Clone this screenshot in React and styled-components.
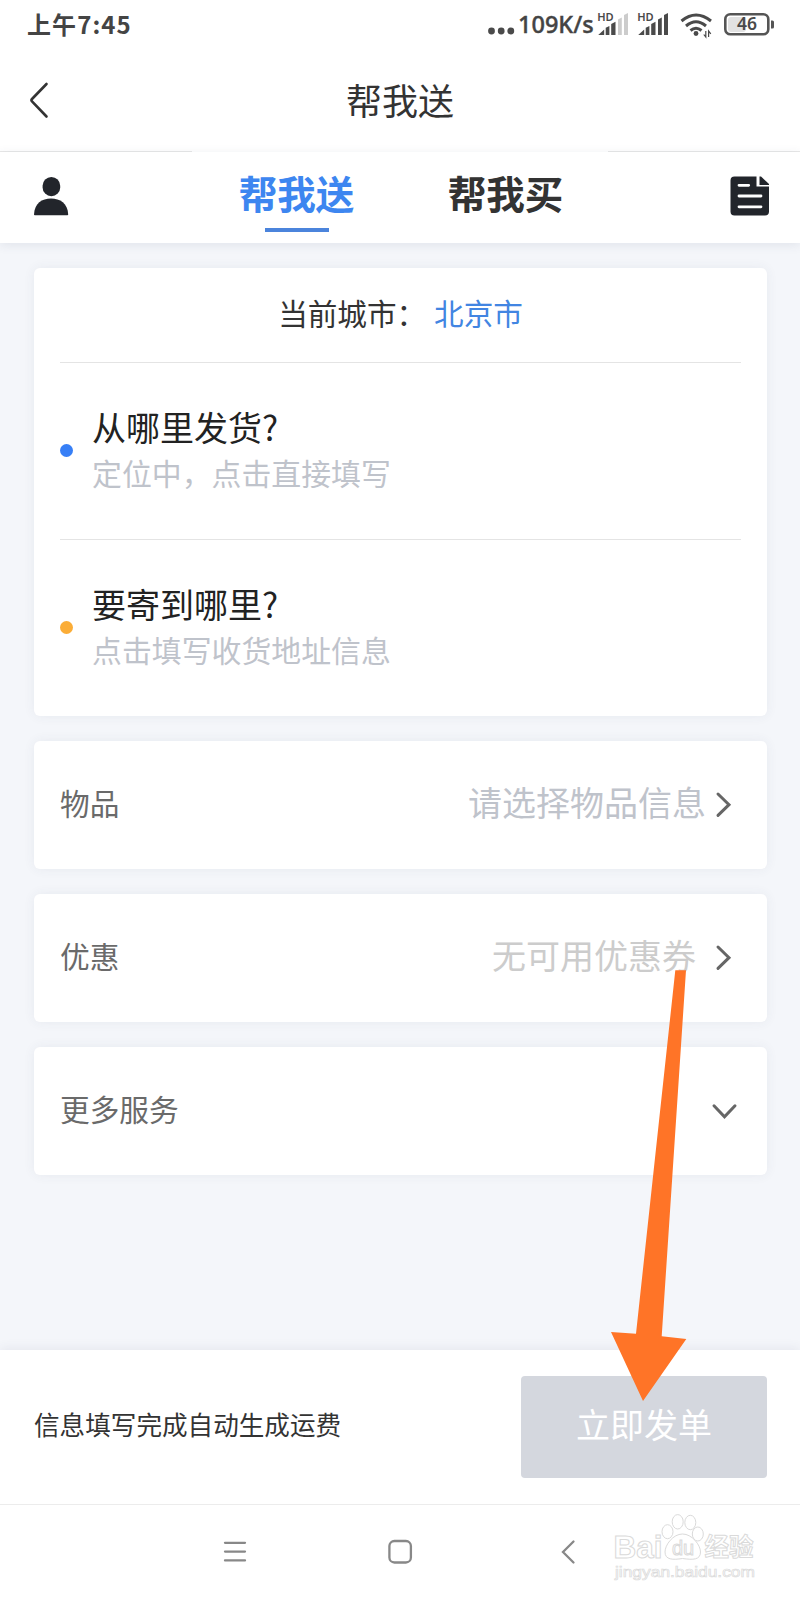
import React from 'react';
import styled, { createGlobalStyle } from 'styled-components';

const Global = createGlobalStyle`
  * { box-sizing: border-box; }
  body { margin: 0; background: #fff; }
`;

const Screen = styled.div`
  position: relative;
  width: 800px;
  height: 1600px;
  display: flex;
  flex-direction: column;
  background: #f4f6fa;
  overflow: hidden;
  font-family: 'Noto Sans CJK SC', sans-serif;
  color: #333;
  white-space: nowrap;
`;

const StatusBar = styled.div`
  height: 50px;
  flex: none;
  padding: 0 25px 0 27px;
  display: flex;
  justify-content: space-between;
  align-items: flex-start;
  background: #fff;
`;

const Clock = styled.span`
  font-size: 24px;
  line-height: 48px;
  font-weight: 700;
  color: #444;
  letter-spacing: 1.1px;
`;

const StatusRight = styled.div`
  display: flex;
  align-items: center;
  height: 50px;
`;

const Speed = styled.span`
  font-family: 'Noto Sans', sans-serif;
  font-size: 23.5px;
  font-weight: 500;
  line-height: 49px;
  height: 50px;
  width: 79px;
  margin-left: 3px;
  color: #444;
  -webkit-text-stroke: 0.4px #444;
`;

const Header = styled.header`
  height: 102px;
  flex: none;
  display: grid;
  grid-template-columns: 192px 1fr 192px;
  background: #fff;
`;

const HeaderSide = styled.div`
  border-bottom: 1px solid #e8e8e8;
  padding: 32px 0 0 28px;
`;

const Title = styled.h1`
  margin: 0;
  font-size: 36px;
  font-weight: 400;
  line-height: 98px;
  text-align: center;
`;

const TabBar = styled.nav`
  height: 91px;
  flex: none;
  padding: 0 30px 0 33px;
  display: flex;
  justify-content: space-between;
  align-items: flex-start;
  background: #fff;
  box-shadow: 0 2px 10px rgba(60, 70, 100, 0.1);
  z-index: 1;
`;

const Tabs = styled.div`
  display: flex;
  gap: 93px;
  padding-left: 3px;
`;

const Tab = styled.div`
  width: 116px;
  height: 80px;
  display: flex;
  flex-direction: column;
  align-items: center;
  justify-content: space-between;
  font-size: 38.5px;
  font-weight: 700;
  line-height: 81px;
  color: ${(p) => (p.$active ? '#3d86f0' : '#333')};
  &::after {
    content: '';
    flex: none;
    width: 64px;
    height: 4px;
    margin-top: -5px;
    background: ${(p) => (p.$active ? '#4b84dc' : 'transparent')};
  }
`;

const TabIcon = styled.div`
  padding-top: 24px;
  height: 80px;
`;

const Content = styled.main`
  flex: 1;
  padding: 25px 33px 0 34px;
  display: flex;
  flex-direction: column;
  gap: 25px;
`;

const Card = styled.section`
  background: #fff;
  border-radius: 6px;
  padding: 0 26px;
  box-shadow: 0 0 12px rgba(60, 70, 100, 0.07);
`;

const AddressCard = styled(Card)`
  height: 448px;
`;

const City = styled.div`
  height: 95px;
  border-bottom: 1px solid #e4e4e4;
  display: flex;
  justify-content: center;
  font-size: 29.6px;
  line-height: 90px;
`;

const CityName = styled.span`
  margin-left: 8px;
  color: #4285e2;
`;

const Address = styled.div`
  height: 177px;
  display: flex;
  align-items: center;
  gap: 19px;
  padding-bottom: ${(p) => (p.$last ? '2px' : '1px')};
  border-bottom: ${(p) => (p.$last ? '0' : '1px solid #e4e4e4')};
`;

const AddressText = styled.div`
  padding-bottom: 4px;
`;

const Dot = styled.i`
  width: 13px;
  height: 13px;
  border-radius: 50%;
  background: ${(p) => p.$color};
`;

const Question = styled.div`
  font-size: 34px;
  line-height: 47px;
  color: #222;
`;

const Hint = styled.div`
  font-size: 29.9px;
  line-height: 45px;
  color: #bfc3cb;
`;

const OptionCard = styled(Card)`
  height: 128px;
  padding-right: 28px;
  display: flex;
  align-items: center;
  font-size: 29.7px;
  line-height: 40px;
  color: #6a6a6a;
`;

const OptionLabel = styled.span`
  padding-bottom: 4px;
`;

const OptionValue = styled.span`
  margin-left: auto;
  margin-right: ${(p) => p.$gap}px;
  padding-bottom: 6px;
  font-size: 34px;
  color: ${(p) => p.$color};
`;

const Chevron = styled.svg`
  flex: none;
  width: 30px;
  height: 30px;
  margin-left: ${(p) => (p.$push ? 'auto' : '0')};
  fill: none;
  stroke: #666;
  stroke-width: 3;
  stroke-linecap: round;
`;

const SubmitBar = styled.footer`
  height: 154px;
  flex: none;
  padding: 0 33px 0 34px;
  display: flex;
  align-items: center;
  justify-content: space-between;
  background: #fff;
  box-shadow: 0 -2px 10px rgba(60, 70, 100, 0.08);
`;

const FeeNote = styled.span`
  padding-bottom: 8px;
  font-size: 25.6px;
`;

const Submit = styled.button`
  width: 246px;
  height: 102px;
  padding: 0 0 6px;
  border: 0;
  border-radius: 4px;
  background: #d4d7de;
  color: #fff;
  font: 400 34px/96px 'Noto Sans CJK SC', sans-serif;
`;

const NavBar = styled.div`
  height: 96px;
  flex: none;
  border-top: 1px solid #ececec;
  background: #fff;
  padding: 0 219px 0 220px;
  display: flex;
  justify-content: space-between;
  align-items: center;
`;

const NavIcon = styled.svg`
  width: 30px;
  height: 30px;
  fill: none;
  stroke: #888;
  stroke-width: 2.3;
  stroke-linecap: round;
`;

const Watermark = styled.div`
  position: absolute;
  left: 613px;
  top: 1512px;
  width: 148px;
  height: 76px;
`;

const Arrow = styled.svg`
  position: absolute;
  left: 600px;
  top: 960px;
  z-index: 3;
`;

function Signal({ weak }) {
  const faint = weak ? '#ccc' : '#4a4a4a';
  return (
    <svg width="40" height="30" viewBox="0 0 40 30" fill="#4a4a4a">
      <text x="0.2" y="11" fontSize="11.5" fontWeight="600" textLength="16.5" lengthAdjust="spacingAndGlyphs" fontFamily="Noto Sans">HD</text>
      <path d="M1.2 25 L7.2 19.5 V25Z M8.7 17.7 L12.4 16 V25 H8.7Z M14.2 14 L18.5 11.8 V25 H14.2Z" />
      <path fill={faint} d="M21 9.5 L24.8 7.5 V25 H21Z M27 5 L31 3 V25 H27Z" />
    </svg>
  );
}

export default function App() {
  return (
    <Screen>
      <Global />
      <StatusBar>
        <Clock>上午7:45</Clock>
        <StatusRight>
          <svg width="28" height="30" viewBox="0 0 28 30" fill="#4a4a4a">
            <circle cx="4.5" cy="21" r="3.4" /><circle cx="14.2" cy="21" r="3.4" /><circle cx="23.8" cy="21" r="3.4" />
          </svg>
          <Speed>109K/s</Speed>
          <Signal weak />
          <Signal />
          <svg width="46" height="30" viewBox="0 0 46 30" fill="none" stroke="#4a4a4a" strokeWidth="3">
            <path d="M4.5 11 Q19 -1 34 11" />
            <path d="M9 16 Q19 7.5 29 16" />
            <path d="M13.5 20.5 Q19 16 24.5 20.5" />
            <circle cx="19" cy="23.5" r="2.4" fill="#4a4a4a" stroke="none" />
            <path strokeWidth="1.2" d="M28.8 21 V27 L26.8 24.5 M31.6 27 V21 L33.8 23.8" />
          </svg>
          <svg width="52" height="30" viewBox="0 0 52 30">
            <rect x="2.3" y="4.3" width="43" height="20" rx="5" fill="none" stroke="#555" strokeWidth="2.6" />
            <rect x="5" y="7" width="18" height="15" rx="3" fill="#e2e2e2" />
            <path d="M48 10.5 h1.5 q1.5 0 1.5 1.5 v5 q0 1.5 -1.5 1.5 h-1.5z" fill="#555" />
            <text x="24" y="20.3" textAnchor="middle" fontSize="17" fontWeight="600" fill="#4a4a4a" fontFamily="Noto Sans" textLength="20" lengthAdjust="spacingAndGlyphs">46</text>
          </svg>
        </StatusRight>
      </StatusBar>

      <Header>
        <HeaderSide>
          <svg width="22" height="38" viewBox="0 0 22 38" fill="none" stroke="#333" strokeWidth="2.6" strokeLinecap="round">
            <path d="M18.5 2 L4 17 Q2.8 18.2 4 19.4 L18.5 34.5" />
          </svg>
        </HeaderSide>
        <Title>帮我送</Title>
        <HeaderSide />
      </Header>

      <TabBar>
        <TabIcon>
          <svg width="36" height="40" viewBox="0 0 36 40" fill="#22252b">
            <rect x="9.6" y="1" width="17.6" height="19.2" rx="8.8" />
            <path d="M1 38.5 C1.5 27 9 22.5 18 22.5 S34.7 27 35.2 38.5 Q35.2 39.2 34.4 39.2 H1.8 Q1 39.2 1 38.5Z" />
          </svg>
        </TabIcon>
        <Tabs>
          <Tab $active>帮我送</Tab>
          <Tab>帮我买</Tab>
        </Tabs>
        <TabIcon>
          <svg width="40" height="40" viewBox="0 0 40 40" fill="#22252b">
            <path d="M4.5 0.5 H26.5 V10.5 H39 V35.5 Q39 39.5 35 39.5 H4.5 Q0.5 39.5 0.5 35.5 V4.5 Q0.5 0.5 4.5 0.5Z" />
            <path d="M29.5 0.5 H31 L39 8 V9 H29.5Z" />
            <path d="M9 9.3 H18.7 M9 20 H31 M9 30.8 H31" stroke="#fff" strokeWidth="2.8" strokeLinecap="round" />
          </svg>
        </TabIcon>
      </TabBar>

      <Content>
        <AddressCard>
          <City>当前城市：<CityName>北京市</CityName></City>
          <Address>
            <Dot $color="#377ff6" />
            <AddressText>
              <Question>从哪里发货?</Question>
              <Hint>定位中，点击直接填写</Hint>
            </AddressText>
          </Address>
          <Address $last>
            <Dot $color="#fbad37" />
            <AddressText>
              <Question>要寄到哪里?</Question>
              <Hint>点击填写收货地址信息</Hint>
            </AddressText>
          </Address>
        </AddressCard>
        <OptionCard>
          <OptionLabel>物品</OptionLabel>
          <OptionValue $color="#bfc3cb" $gap={3}>请选择物品信息</OptionValue>
          <Chevron viewBox="0 0 30 30"><path d="M9 4 L20 14.7 L9 25.4" /></Chevron>
        </OptionCard>
        <OptionCard>
          <OptionLabel>优惠</OptionLabel>
          <OptionValue $color="#ccc" $gap={13}>无可用优惠券</OptionValue>
          <Chevron viewBox="0 0 30 30"><path d="M9 4 L20 14.7 L9 25.4" /></Chevron>
        </OptionCard>
        <OptionCard>
          <OptionLabel>更多服务</OptionLabel>
          <Chevron $push viewBox="0 0 30 30"><path d="M5 9.8 L15.5 20.8 L26 9.8" /></Chevron>
        </OptionCard>
      </Content>

      <SubmitBar>
        <FeeNote>信息填写完成自动生成运费</FeeNote>
        <Submit>立即发单</Submit>
      </SubmitBar>

      <NavBar>
        <NavIcon viewBox="0 0 30 30"><path d="M5 4.8 H25 M5 13.6 H25 M5 22.4 H25" /></NavIcon>
        <NavIcon viewBox="0 0 30 30"><rect x="3.4" y="3" width="21.5" height="21.5" rx="5" /></NavIcon>
        <NavIcon viewBox="0 0 30 30"><path d="M22.5 3.5 L12 14 L22.5 24.5" /></NavIcon>
      </NavBar>

      <Watermark>
        <svg width="148" height="76" viewBox="0 0 148 76" fill="#fff" stroke="#dadada" strokeWidth="1">
          <g fontWeight="700" fontFamily="Liberation Sans">
            <text x="0.5" y="45.5" fontSize="31" textLength="49" lengthAdjust="spacingAndGlyphs">Bai</text>
            <text x="91.5" y="44" fontSize="24.5" fontFamily="Noto Sans CJK SC">经验</text>
          </g>
          <ellipse cx="54.5" cy="19.7" rx="5.5" ry="7" />
          <ellipse cx="64.7" cy="9.8" rx="5.5" ry="7.2" />
          <ellipse cx="77.3" cy="10.5" rx="5.5" ry="7.2" />
          <ellipse cx="84.8" cy="22" rx="5.5" ry="7" />
          <path d="M69.5 22 C60 22 52 33 52 40 C52 48 60 48 69.5 46.5 C80 48 87.5 48 87.5 40 C87.5 33 79 22 69.5 22Z" />
          <text x="59" y="43" fontSize="20" fontFamily="Liberation Sans" textLength="22">du</text>
          <text x="2" y="65" fontSize="15.5" fontFamily="Liberation Sans" textLength="140" lengthAdjust="spacingAndGlyphs" strokeWidth="0.7">jingyan.baidu.com</text>
        </svg>
      </Watermark>

      <Arrow width="100" height="450" viewBox="600 960 100 450">
        <path fill="#ff7427" d="M675.3 970.3 H686 L661.7 1336.3 L686.3 1339 L643 1401 L611 1332 L636 1333.7Z" />
      </Arrow>
    </Screen>
  );
}
